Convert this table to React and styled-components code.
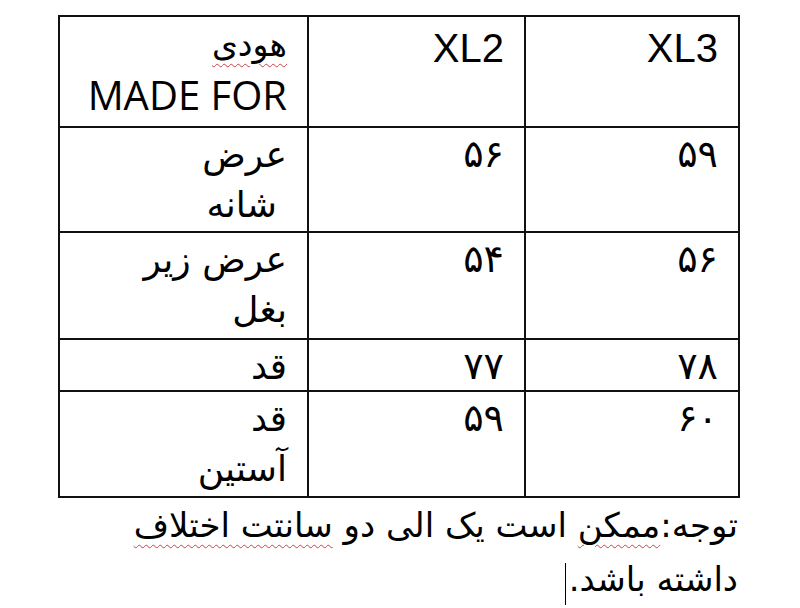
import React from 'react';
import styled, { createGlobalStyle } from 'styled-components';

const GlobalStyle = createGlobalStyle`
  html, body {
    margin: 0;
    padding: 0;
    background: #ffffff;
  }
  body {
    font-family: "DejaVu Sans", "Liberation Sans", sans-serif;
    color: #000;
  }
`;

const rows = [
  { label: ['عرض', ' شانه'], xl2: '۵۶', xl3: '۵۹', height: 103 },
  { label: ['عرض زیر', 'بغل'], xl2: '۵۴', xl3: '۵۶', height: 105 },
  { label: ['قد'], xl2: '۷۷', xl3: '۷۸', height: 50 },
  { label: ['قد', 'آستین'], xl2: '۵۹', xl3: '۶۰', height: 104 },
];

const App = () => {
  return (
    <Page>
      <GlobalStyle />
      <Table>
        <HeadCell>
          <Hoodie>
            <Spell>هودی</Spell>
          </Hoodie>
          <Latin>MADE FOR</Latin>
        </HeadCell>
        <HeadCell>
          <Size>XL2</Size>
        </HeadCell>
        <HeadCell>
          <Size>XL3</Size>
        </HeadCell>

        {rows.map((row, i) => (
          <React.Fragment key={i}>
            <Cell $h={row.height}>
              {row.label.map((line, j) => (
                <Line key={j} $nudge={line.startsWith(' ')}>
                  {line.trim()}
                </Line>
              ))}
            </Cell>
            <Cell $h={row.height}>
              <Digits>{row.xl2}</Digits>
            </Cell>
            <Cell $h={row.height}>
              <Digits>{row.xl3}</Digits>
            </Cell>
          </React.Fragment>
        ))}
      </Table>

      <Note>
        <NoteLine>
          توجه:<Spell>ممکن</Spell> است یک الی دو <Spell>سانتت اختلاف</Spell>
        </NoteLine>
        <NoteLine>
          داشته باشد.
          <Caret />
        </NoteLine>
      </Note>
    </Page>
  );
};

export default App;

const Page = styled.div`
  padding: 15px 0 0 58px;
  width: 682px;
`;

const Table = styled.div`
  display: grid;
  grid-template-columns: 247px 215px 212px;
  grid-template-rows: 109px;
  gap: 2px;
  padding: 2px;
  background: #111;
`;

const Cell = styled.div`
  background: #fff;
  height: ${props => props.$h}px;
  padding: 2px 20px 0 0;
  box-sizing: border-box;
  direction: rtl;
  text-align: right;
  font-size: 36px;
`;

const HeadCell = styled.div`
  background: #fff;
  height: 109px;
  padding: 3px 20px 0 0;
  box-sizing: border-box;
  text-align: right;
`;

const Line = styled.div`
  line-height: 50px;
  white-space: nowrap;
  padding-right: ${props => (props.$nudge ? '10px' : '0')};
`;

const Digits = styled.div`
  font-size: 38px;
  line-height: 48px;
`;

const Hoodie = styled.div`
  direction: rtl;
  font-size: 33px;
  line-height: 50px;
`;

const Latin = styled.div`
  font-family: "Open Sans", "Liberation Sans", sans-serif;
  font-size: 40px;
  line-height: 50px;
`;

const Size = styled.div`
  font-family: "Liberation Sans", Arial, sans-serif;
  font-size: 40px;
  line-height: 56px;
`;

const Spell = styled.span`
  text-decoration: underline wavy #c8414b;
  text-decoration-thickness: 1px;
  text-underline-offset: 7px;
`;

const Note = styled.div`
  direction: rtl;
  text-align: right;
  padding-right: 2px;
  font-size: 34px;
`;

const NoteLine = styled.div`
  line-height: 54px;
  white-space: nowrap;
`;

const Caret = styled.span`
  display: inline-block;
  width: 1px;
  height: 42px;
  margin-right: 3px;
  vertical-align: -14px;
  background: #000;
`;
